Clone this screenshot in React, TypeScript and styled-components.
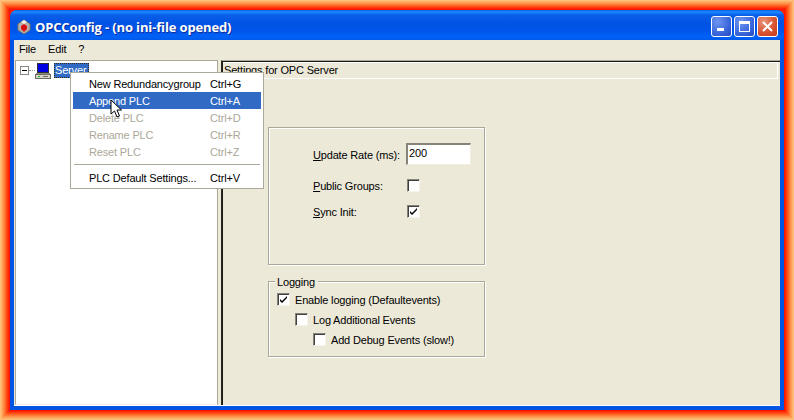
import React from "react";
import styled, { createGlobalStyle } from "styled-components";

const Global = createGlobalStyle`
  html, body { margin: 0; padding: 0; background: #ff9a50; }
  #root { width: 794px; height: 420px; overflow: hidden; }
  * { box-sizing: border-box; }
`;

const Glow = styled.div`
  width: 794px;
  height: 420px;
  padding: 10px;
  background: #ff2000;
  box-shadow:
    inset 0 0 0 1px #ffc078,
    inset 0 0 0 2px #ffb068,
    inset 0 0 0 3px #ffa058,
    inset 0 0 0 4px #ff9048,
    inset 0 0 0 5px #ff7c38,
    inset 0 0 0 6px #ff6828,
    inset 0 0 0 7px #ff5018,
    inset 0 0 0 8px #ff3c0c,
    inset 0 0 0 9px #ff2804,
    inset 0 0 0 10px #fa1400;
`;

const Win = styled.div`
  width: 774px;
  height: 400px;
  display: flex;
  flex-direction: column;
  background: #0055e5;
  border-radius: 7px 7px 0 0;
  font-family: "Liberation Sans", Arial, sans-serif;
  font-size: 11px;
  letter-spacing: -0.17px;
  color: #000;
  overflow: hidden;
`;

const TitleBar = styled.div`
  height: 30px;
  flex: none;
  display: flex;
  align-items: center;
  padding: 3px 6px 0 7px;
  background: linear-gradient(180deg, #0a6af0 0%, #1a86ff 8%, #0a5fe8 16%, #0053e4 45%, #0055ea 70%, #0062f8 90%, #0058ea 100%);
`;

const TitleText = styled.div`
  margin-left: 4px;
  color: #fff;
  font-family: "Open Sans", sans-serif;
  font-weight: 700;
  font-size: 13px;
  letter-spacing: -0.14px;
  text-shadow: 1px 1px 0 #0f2f9a;
  flex: 1;
  white-space: nowrap;
`;

const CapBtn = styled.div<{ $close?: boolean }>`
  width: 21px;
  height: 21px;
  margin-left: 2px;
  border: 1px solid #fff;
  border-radius: 3px;
  display: flex;
  align-items: center;
  justify-content: center;
  background: ${(p) =>
    p.$close
      ? "radial-gradient(circle at 30% 25%, #e8937a, #d8502e 60%, #c23a1c)"
      : "radial-gradient(circle at 30% 25%, #6f96f0, #3a66dc 60%, #2348c0)"};
`;

const Client = styled.div`
  flex: 1;
  margin: 0 4px 4px 4px;
  background: #ece9d8;
  display: flex;
  flex-direction: column;
  min-height: 0;
  border-bottom: 1px solid #fff;
`;

const MenuBar = styled.div`
  height: 19px;
  flex: none;
  display: flex;
  align-items: center;
  padding: 0 0 1px 5px;
  gap: 12px;
`;

const Body = styled.div`
  flex: 1;
  display: flex;
  min-height: 0;
  padding: 1px 0 0 1px;
`;

const Tree = styled.div`
  width: 203px;
  flex: none;
  background: #fff;
  border-top: 1px solid #aca899;
  border-left: 1px solid #aca899;
  border-right: 1px solid #aca899;
  border-bottom: 1px solid #f1efe2;
  padding: 1px 0 0 4px;
`;

const TreeRow = styled.div`
  display: flex;
  align-items: center;
  height: 17px;
`;

const Expander = styled.div`
  width: 9px;
  height: 9px;
  border: 1px solid #8a8a80;
  position: relative;
  background: #fff;
  &::after {
    content: "";
    position: absolute;
    left: 1px;
    right: 1px;
    top: 3px;
    height: 1px;
    background: #000;
  }
`;

const Dots = styled.div`
  width: 6px;
  height: 1px;
  border-top: 1px dotted #9a9a90;
`;

const Selected = styled.div`
  margin-left: 3px;
  width: 35px;
  height: 15px;
  background: #316ac5;
  color: #fff;
  outline: 1px dotted #3a2a00;
  outline-offset: -1px;
  line-height: 14px;
  padding-left: 1px;
`;

const Right = styled.div`
  flex: 1;
  margin-left: 3px;
  border-left: 1px solid #2a2a22;
  border-top: 1px solid #aca899;
  box-shadow: inset 1px 1px 0 #1c1c14;
  padding: 1px 2px 0 1px;
  display: flex;
  flex-direction: column;
  min-width: 0;
`;

const Header = styled.div`
  height: 17px;
  flex: none;
  border: 1px solid #fff;
  border-left: none;
  border-right-color: #fff;
  line-height: 15px;
  padding-left: 1px;
  white-space: nowrap;
`;

const Groups = styled.div`
  margin: 48px 0 0 45px;
  width: 217px;
  display: flex;
  flex-direction: column;
  gap: 16px;
`;

const Box = styled.div`
  border: 1px solid #aca899;
  box-shadow: 1px 1px 0 #fff, inset 1px 1px 0 #fff;
  position: relative;
`;

const SettingsBox = styled(Box)`
  height: 138px;
  display: grid;
  grid-template-columns: 93px auto;
  grid-template-rows: 23px 13px 13px;
  row-gap: 13px;
  align-content: start;
  padding: 15px 0 0 44px;
  align-items: center;
`;

const LogBox = styled(Box)`
  height: 76px;
  padding: 11px 0 0 8px;
  display: flex;
  flex-direction: column;
`;

const Legend = styled.div`
  position: absolute;
  top: -6px;
  left: 6px;
  background: #ece9d8;
  padding: 0 3px 0 2px;
  line-height: 12px;
`;

const Field = styled.div`
  width: 65px;
  height: 22px;
  align-self: start;
  background: #fff;
  border: 1px solid #fff;
  border-top: 2px solid #85837a;
  border-left: 2px solid #85837a;
  border-right-color: #f1efe2;
  border-bottom-color: #f1efe2;
  line-height: 16px;
  padding-left: 1px;
`;

const Cell = styled.div`
  justify-self: start;
  margin-left: 1px;
`;

const Check = styled.div`
  width: 13px;
  height: 13px;
  flex: none;
  background: #fff;
  border-top: 1px solid #85837a;
  border-left: 1px solid #85837a;
  border-right: 1px solid #f6f4ea;
  border-bottom: 1px solid #f6f4ea;
  box-shadow: inset 1px 1px 0 #404040;
  display: flex;
  align-items: center;
  justify-content: center;
`;

const LogRow = styled.div<{ $indent: number; $gap: number }>`
  display: flex;
  align-items: center;
  gap: 5px;
  height: 13px;
  padding-left: ${(p) => p.$indent}px;
  margin-bottom: ${(p) => p.$gap}px;
`;

const Popup = styled.div`
  position: absolute;
  left: 70px;
  top: 72px;
  width: 194px;
  height: 117px;
  background: #fff;
  border: 1px solid #aca899;
  padding: 2px 2px;
  font-family: "Liberation Sans", Arial, sans-serif;
  font-size: 11px;
  letter-spacing: -0.17px;
`;

const Item = styled.div<{ $active?: boolean; $disabled?: boolean }>`
  height: 17px;
  display: flex;
  align-items: center;
  padding-left: 16px;
  background: ${(p) => (p.$active ? "#316ac5" : "transparent")};
  color: ${(p) => (p.$active ? "#fff" : p.$disabled ? "#aca899" : "#000")};
`;

const ItemLabel = styled.span`
  width: 121px;
  white-space: nowrap;
`;

const Separator = styled.div`
  height: 1px;
  background: #aca899;
  margin: 4px 1px 4px;
`;

const Cursor = styled.svg`
  position: absolute;
  left: 110px;
  top: 99px;
`;

const U = styled.span`
  text-decoration: underline;
`;

const Tick = () => (
  <svg width="9" height="9" viewBox="0 0 9 9">
    <path d="M1 4l2 2 5-5v2L3 8 1 6z" fill="#000" />
  </svg>
);

const Item2 = ({ label, keys, active, disabled }: { label: string; keys: string; active?: boolean; disabled?: boolean }) => (
  <Item $active={active} $disabled={disabled}>
    <ItemLabel>{label}</ItemLabel>
    <span>{keys}</span>
  </Item>
);

export default function App() {
  return (
    <>
      <Global />
      <Glow>
        <Win>
          <TitleBar>
            <svg width="14" height="16" viewBox="0 0 14 16">
              <path d="M7 1l6 4v6l-6 4-6-4V5z" fill="#b8b4ac" stroke="#77756e" />
              <path d="M7 5l3 2v3l-3 3-3-3V7z" fill="#d81010" />
              <path d="M7 1l3 2-3 2-3-2z" fill="#f2efe8" />
            </svg>
            <TitleText>OPCConfig - (no ini-file opened)</TitleText>
            <CapBtn>
              <svg width="11" height="11" viewBox="0 0 11 11">
                <rect x="1" y="7" width="7" height="3" fill="#fff" />
              </svg>
            </CapBtn>
            <CapBtn>
              <svg width="13" height="13" viewBox="0 0 13 13">
                <path d="M1 1h11v11H1zM2 4v7h9V4z" fill="#fff" fillRule="evenodd" />
              </svg>
            </CapBtn>
            <CapBtn $close>
              <svg width="13" height="13" viewBox="0 0 13 13">
                <path d="M2 2l9 9M11 2l-9 9" stroke="#fff" strokeWidth="2" />
              </svg>
            </CapBtn>
          </TitleBar>
          <Client>
            <MenuBar>
              <span>File</span>
              <span>Edit</span>
              <span>?</span>
            </MenuBar>
            <Body>
              <Tree>
                <TreeRow>
                  <Expander />
                  <Dots />
                  <svg width="16" height="16" viewBox="0 0 16 16">
                    <rect x="2.5" y="0.5" width="11" height="9" fill="#0000e0" stroke="#30302c" />
                    <rect x="1" y="10" width="14" height="1" fill="#8c8c84" />
                    <rect x="0.5" y="11.5" width="15" height="4" fill="#d8d4c8" stroke="#6c6c64" />
                    <rect x="3" y="13" width="2" height="1" fill="#10c010" />
                    <rect x="8" y="13" width="5" height="1" fill="#6c6c64" />
                  </svg>
                  <Selected>Server</Selected>
                </TreeRow>
              </Tree>
              <Right>
                <Header>Settings for OPC Server</Header>
                <Groups>
                  <SettingsBox>
                    <span><U>U</U>pdate Rate (ms):</span>
                    <Field>200</Field>
                    <span><U>P</U>ublic Groups:</span>
                    <Cell><Check /></Cell>
                    <span><U>S</U>ync Init:</span>
                    <Cell><Check><Tick /></Check></Cell>
                  </SettingsBox>
                  <LogBox>
                    <Legend>Logging</Legend>
                    <LogRow $indent={0} $gap={7}>
                      <Check><Tick /></Check>
                      <span>Enable logging (Defaultevents)</span>
                    </LogRow>
                    <LogRow $indent={18} $gap={7}>
                      <Check />
                      <span>Log Additional Events</span>
                    </LogRow>
                    <LogRow $indent={36} $gap={0}>
                      <Check />
                      <span>Add Debug Events (slow!)</span>
                    </LogRow>
                  </LogBox>
                </Groups>
              </Right>
            </Body>
          </Client>
        </Win>
        <Popup>
          <Item2 label="New Redundancygroup" keys="Ctrl+G" />
          <Item2 label="Append PLC" keys="Ctrl+A" active />
          <Item2 label="Delete PLC" keys="Ctrl+D" disabled />
          <Item2 label="Rename PLC" keys="Ctrl+R" disabled />
          <Item2 label="Reset PLC" keys="Ctrl+Z" disabled />
          <Separator />
          <Item2 label="PLC Default Settings..." keys="Ctrl+V" />
        </Popup>
        <Cursor width="13" height="20" viewBox="0 0 13 20">
          <path d="M1 1v14l3.5-3 2.5 6 2.5-1-2.5-6h4.5z" fill="#fff" stroke="#000" strokeWidth="1" />
        </Cursor>
      </Glow>
    </>
  );
}
